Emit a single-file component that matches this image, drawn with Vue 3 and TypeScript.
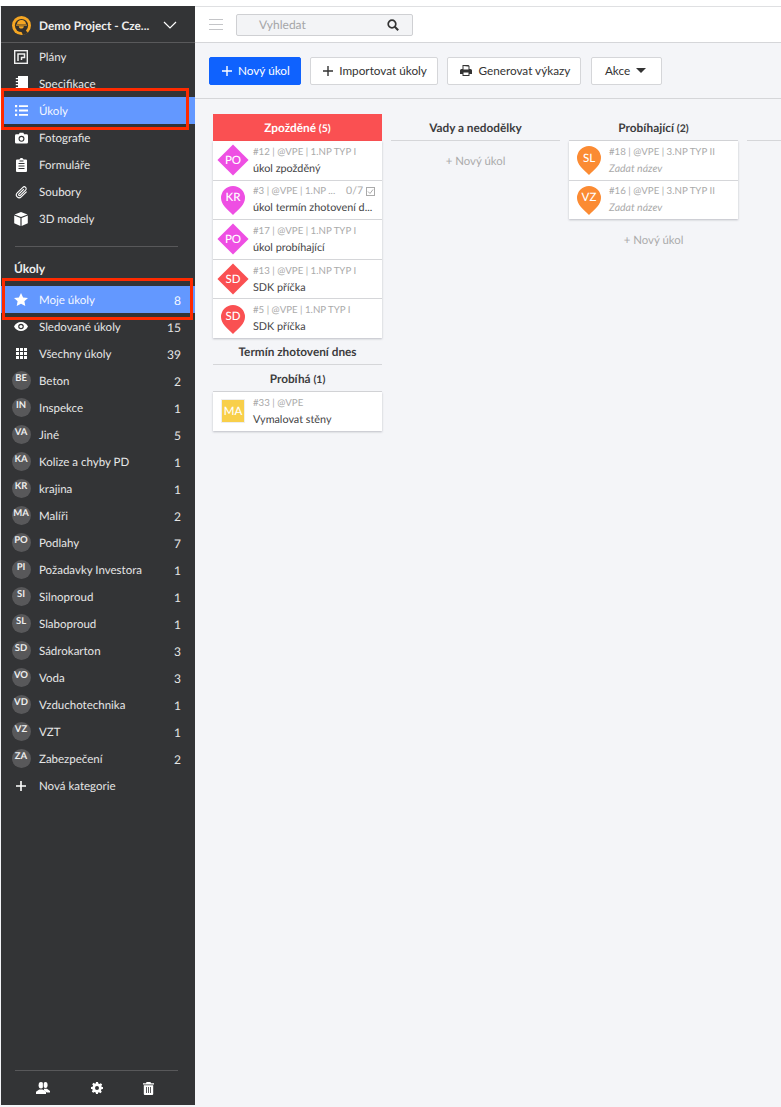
<script setup lang="ts">
interface NavItem { label: string; icon: string; active?: boolean }
interface Cat { code?: string; icon?: string; label: string; count?: number; active?: boolean }
interface Task { meta: string; title: string; code: string; color: string; shape: 'diamond' | 'pin' | 'square'; extra?: string; unnamed?: boolean }

const nav: NavItem[] = [
  { label: 'Plány', icon: 'plan' },
  { label: 'Specifikace', icon: 'book' },
  { label: 'Úkoly', icon: 'list', active: true },
  { label: 'Fotografie', icon: 'camera' },
  { label: 'Formuláře', icon: 'clip' },
  { label: 'Soubory', icon: 'paperclip' },
  { label: '3D modely', icon: 'cube' },
]
const cats: Cat[] = [
  { icon: 'star', label: 'Moje úkoly', count: 8, active: true },
  { icon: 'eye', label: 'Sledované úkoly', count: 15 },
  { icon: 'grid', label: 'Všechny úkoly', count: 39 },
  { code: 'BE', label: 'Beton', count: 2 },
  { code: 'IN', label: 'Inspekce', count: 1 },
  { code: 'VA', label: 'Jiné', count: 5 },
  { code: 'KA', label: 'Kolize a chyby PD', count: 1 },
  { code: 'KR', label: 'krajina', count: 1 },
  { code: 'MA', label: 'Malíři', count: 2 },
  { code: 'PO', label: 'Podlahy', count: 7 },
  { code: 'PI', label: 'Požadavky Investora', count: 1 },
  { code: 'SI', label: 'Silnoproud', count: 1 },
  { code: 'SL', label: 'Slaboproud', count: 1 },
  { code: 'SD', label: 'Sádrokarton', count: 3 },
  { code: 'VO', label: 'Voda', count: 3 },
  { code: 'VD', label: 'Vzduchotechnika', count: 1 },
  { code: 'VZ', label: 'VZT', count: 1 },
  { code: 'ZA', label: 'Zabezpečení', count: 2 },
  { icon: 'plus', label: 'Nová kategorie' },
]
const pink = '#ee4fe3'
const red = '#fa5052'
const orange = '#fb8b33'
const late: Task[] = [
  { meta: '#12 | @VPE | 1.NP TYP I', title: 'úkol zpožděný', code: 'PO', color: pink, shape: 'diamond' },
  { meta: '#3 | @VPE | 1.NP ...', title: 'úkol termín zhotovení d...', code: 'KR', color: pink, shape: 'pin', extra: '0/7' },
  { meta: '#17 | @VPE | 1.NP TYP I', title: 'úkol probíhající', code: 'PO', color: pink, shape: 'diamond' },
  { meta: '#13 | @VPE | 1.NP TYP I', title: 'SDK příčka', code: 'SD', color: red, shape: 'diamond' },
  { meta: '#5 | @VPE | 1.NP TYP I', title: 'SDK příčka', code: 'SD', color: red, shape: 'pin' },
]
const doing: Task[] = [
  { meta: '#33 | @VPE', title: 'Vymalovat stěny', code: 'MA', color: '#f8cf4a', shape: 'square' },
]
const running: Task[] = [
  { meta: '#18 | @VPE | 3.NP TYP II', title: 'Zadat název', code: 'SL', color: orange, shape: 'pin', unnamed: true },
  { meta: '#16 | @VPE | 3.NP TYP II', title: 'Zadat název', code: 'VZ', color: orange, shape: 'pin', unnamed: true },
]
const groups = [
  { tasks: late },
  { tasks: doing },
]
</script>

<template>
  <div class="app">
    <aside class="side">
      <div class="project">
        <svg class="logo" viewBox="0 0 19 19" width="19" height="19">
          <circle cx="9.500" cy="9.500" r="9.500" fill="#f5a623" />
          <circle cx="9.500" cy="9.500" r="6.600" fill="#33302c" />
          <path d="M5 8.200C5.200 5 7.400 4 9.500 4s4.300 1 4.500 4.200z" fill="#f5a623" />
          <rect x="4" y="8.600" width="11" height="1" fill="#f5a623" />
          <path d="M6.800 10.200h5c0 1.600-1 2.400-2.500 2.400s-2.500-.8-2.500-2.400z" fill="#f5a623" />
          <path d="M11 19l-2-4 3.500-2 3.500 4z" fill="#33302c" />
        </svg>
        <span class="pname">Demo Project - Cze...</span>
        <svg class="chev" viewBox="0 0 14 8" width="14" height="8"><path d="M1 1l6 6 6-6" fill="none" stroke="#fff" stroke-width="1.200" /></svg>
      </div>

      <nav class="nav">
        <a v-for="n in nav" :key="n.label" class="row" :class="{ on: n.active }">
          <span class="ic">
            <svg v-if="n.icon === 'plan'" viewBox="0 0 14 14" width="14" height="14"><rect x=".7" y=".7" width="12.600" height="12.600" fill="none" stroke="#f0f0f0" stroke-width="1.400" /><path d="M4 11V4h6.500v3.500H7.500V10" fill="none" stroke="#f0f0f0" stroke-width="1.500" /></svg>
            <svg v-else-if="n.icon === 'book'" viewBox="0 0 13 15" width="13" height="15"><path fill="#fff" d="M3 0h10v15H3zM.8 2h3v1.200H.8zM.8 5h3v1.200H.8zM.8 8h3v1.200H.8zM.8 11h3v1.200H.8z" /></svg>
            <svg v-else-if="n.icon === 'list'" viewBox="0 0 13 11" width="13" height="11"><path fill="#fff" d="M0 0h2.200v2.200H0zM0 4.400h2.200v2.200H0zM0 8.800h2.200V11H0zM4 .2h9v1.800H4zM4 4.600h9v1.800H4zM4 9h9v1.800H4z" /></svg>
            <svg v-else-if="n.icon === 'camera'" viewBox="0 0 14 12" width="13" height="12"><path fill="#fff" fill-rule="evenodd" d="M1.500 2h2.700L5 .3h4l.8 1.700h2.700A1.500 1.500 0 0 1 14 3.500v7a1.500 1.500 0 0 1-1.500 1.500h-11A1.500 1.500 0 0 1 0 10.500v-7A1.500 1.500 0 0 1 1.500 2zM7 3.700a3.200 3.200 0 1 0 0 6.400 3.200 3.200 0 0 0 0-6.400z" /><circle cx="7" cy="6.900" r="2" fill="#fff" /></svg>
            <svg v-else-if="n.icon === 'clip'" viewBox="0 0 11 14" width="11" height="14"><path fill="#fff" fill-rule="evenodd" d="M1 1.500h2.500C3.700.600 4.500 0 5.500 0s1.800.6 2 1.500H10a1 1 0 0 1 1 1V13a1 1 0 0 1-1 1H1a1 1 0 0 1-1-1V2.500a1 1 0 0 1 1-1zM2.500 5h6v1h-6zM2.500 7.500h6v1h-6zM2.500 10h6v1h-6zM3.500 2.500v1h4v-1z" /></svg>
            <svg v-else-if="n.icon === 'paperclip'" viewBox="0 0 14 14" width="13" height="14"><path fill="none" stroke="#fff" stroke-width="1.200" d="M12.500 6.500l-5.800 5.800a3 3 0 0 1-4.300-4.300L8.500 2a2 2 0 0 1 2.900 2.900L5.500 10.800a1 1 0 0 1-1.400-1.400L9.500 4" /></svg>
            <svg v-else viewBox="0 0 14 14" width="14" height="14"><path fill="#fff" d="M7 0l6.500 2.400L7 4.900.5 2.400zM.2 3.500l6.200 2.400V14L.2 11.300zM13.800 3.500L7.600 5.900V14l6.200-2.700z" /></svg>
          </span>
          <span class="lbl">{{ n.label }}</span>
        </a>
      </nav>

      <hr class="rule first" />
      <div class="head">Úkoly</div>

      <div class="cats">
        <a v-for="c in cats" :key="c.label" class="row" :class="{ on: c.active }">
          <span v-if="c.code" class="ic"><span class="badge">{{ c.code }}</span></span>
          <span v-else class="ic">
            <svg v-if="c.icon === 'star'" viewBox="0 0 14 13" width="14" height="13"><path fill="#fff" d="M7 0l2.100 4.400 4.900.6-3.600 3.300.9 4.700L7 10.700 2.700 13l.9-4.700L0 5l4.900-.6z" /></svg>
            <svg v-else-if="c.icon === 'eye'" viewBox="0 0 14 9" width="14" height="9"><path fill="#fff" fill-rule="evenodd" d="M0 4.500C1.500 1.700 4 0 7 0s5.500 1.700 7 4.500C12.500 7.300 10 9 7 9S1.500 7.300 0 4.500zM7 1.700a2.800 2.800 0 1 0 0 5.600 2.800 2.800 0 0 0 0-5.600z" /><circle cx="7" cy="4.500" r="1.600" fill="#fff" /></svg>
            <svg v-else-if="c.icon === 'grid'" viewBox="0 0 11 11" width="11" height="11"><path fill="#fff" d="M0 0h3v3H0zM4 0h3v3H4zM8 0h3v3H8zM0 4h3v3H0zM4 4h3v3H4zM8 4h3v3H8zM0 8h3v3H0zM4 8h3v3H4zM8 8h3v3H8z" /></svg>
            <svg v-else viewBox="0 0 10 10" width="10" height="10"><path fill="#fff" d="M4.200 0h1.600v4.200H10v1.600H5.800V10H4.200V5.800H0V4.200h4.200z" /></svg>
          </span>
          <span class="lbl">{{ c.label }}</span>
          <span v-if="c.count" class="count">{{ c.count }}</span>
        </a>
      </div>

      <div class="foot">
        <hr class="rule last" />
        <div class="tools">
          <svg viewBox="0 0 14 12" width="14" height="12"><ellipse cx="5" cy="3.200" rx="2.400" ry="3.200" fill="#fff" /><path fill="#fff" d="M0 12V9.800L3.200 7.500h3.600L10 9.800V12z" /><ellipse cx="9.500" cy="3" rx="2.100" ry="3" fill="#fff" /><path fill="#fff" d="M8 6.800h3l3 2.200v1.500h-3.200L7.800 8.300z" /><path d="M7.300 1v7" stroke="#333436" stroke-width=".7" /></svg>
          <svg viewBox="0 0 12 12" width="12" height="12"><path fill="#fff" fill-rule="evenodd" d="M5 0h2l.3 1.600 1.100.5L9.800 1.200l1.400 1.400-.9 1.400.5 1.100L12 5v2l-1.600.3-.5 1.100.9 1.400-1.400 1.400-1.400-.9-1.100.5L7 12H5l-.3-1.600-1.100-.5-1.400.9L.8 9.400l.9-1.400-.5-1.100L0 7V5l1.600-.3.500-1.100-.9-1.400L2.600.8 4 1.700l.7-.3zM6 4a2 2 0 1 0 0 4 2 2 0 0 0 0-4z" /></svg>
          <svg viewBox="0 0 11 13" width="11" height="13"><path fill="#fff" fill-rule="evenodd" d="M3.500 0h4l.5 1.200h3v1.300H0V1.200h3zM.8 3.300h9.400V12a1 1 0 0 1-1 1H1.800a1 1 0 0 1-1-1zM3 5v6h.8V5zM5.100 5v6h.8V5zM7.200 5v6H8V5z" /></svg>
        </div>
      </div>
    </aside>

    <main class="main">
      <header class="top">
        <span class="burger"><i></i><i></i><i></i></span>
        <div class="search">
          <span>Vyhledat</span>
          <svg viewBox="0 0 12 12" width="12" height="12"><circle cx="5" cy="5" r="3.800" fill="none" stroke="#333" stroke-width="1.700" /><path d="M7.800 7.800L11.200 11.200" stroke="#333" stroke-width="2" /></svg>
        </div>
      </header>

      <div class="toolbar">
        <button class="btn primary"><svg viewBox="0 0 10 10" width="10" height="10"><path fill="#fff" d="M4.300 0h1.400v4.300H10v1.400H5.700V10H4.300V5.700H0V4.300h4.300z" /></svg>Nový úkol</button>
        <button class="btn"><svg viewBox="0 0 10 10" width="10" height="10"><path fill="#333" d="M4.300 0h1.400v4.300H10v1.400H5.700V10H4.300V5.700H0V4.300h4.300z" /></svg>Importovat úkoly</button>
        <button class="btn"><svg viewBox="0 0 12 11" width="12" height="11"><path fill="#333" fill-rule="evenodd" d="M2.500 0h6l1 1v3h1A1.500 1.500 0 0 1 12 5.500V9H9.500v2h-7V9H0V5.500A1.500 1.500 0 0 1 1.500 4h1zM3.500 1v3.500h5V1.500H8zM3.500 7.500V10h5V7.500z" /></svg>Generovat výkazy</button>
        <button class="btn akce">Akce<i class="caret"></i></button>
      </div>

      <section class="board">
        <div class="col">
          <div class="ctitle late">Zpožděné <small>(5)</small></div>
          <div class="cards">
            <article v-for="t in groups[0].tasks" :key="t.meta" class="card">
              <span class="mark" :class="t.shape">
                <svg v-if="t.shape === 'pin'" viewBox="0 0 24 29" width="24" height="29"><path :fill="t.color" d="M12 0a12 12 0 0 1 12 12c0 6.500-6 11-12 17C6 23 0 18.500 0 12A12 12 0 0 1 12 0z" /></svg>
                <i v-else-if="t.shape === 'diamond'" :style="{ background: t.color }"></i>
                <b>{{ t.code }}</b>
              </span>
              <div class="ctext">
                <div class="meta"><span>{{ t.meta }}</span><span v-if="t.extra" class="extra">{{ t.extra }}
                  <svg viewBox="0 0 9 9" width="9" height="9"><rect x=".5" y=".5" width="8" height="8" fill="none" stroke="#aaa" /><path d="M2 4.500l2 2 3-4" fill="none" stroke="#aaa" /></svg></span></div>
                <div class="ttl">{{ t.title }}</div>
              </div>
            </article>
          </div>
          <div class="ctitle sub">Termín zhotovení dnes</div>
          <div class="ctitle sub">Probíhá <small>(1)</small></div>
          <div class="cards">
            <article v-for="t in groups[1].tasks" :key="t.meta" class="card">
              <span class="mark square" :style="{ background: t.color }"><b>{{ t.code }}</b></span>
              <div class="ctext">
                <div class="meta"><span>{{ t.meta }}</span></div>
                <div class="ttl">{{ t.title }}</div>
              </div>
            </article>
          </div>
        </div>

        <div class="col">
          <div class="ctitle">Vady a nedodělky</div>
          <div class="add first-add">+ Nový úkol</div>
        </div>

        <div class="col">
          <div class="ctitle">Probíhající <small>(2)</small></div>
          <div class="cards">
            <article v-for="t in running" :key="t.meta" class="card">
              <span class="mark pin">
                <svg viewBox="0 0 24 29" width="24" height="29"><path :fill="t.color" d="M12 0a12 12 0 0 1 12 12c0 6.500-6 11-12 17C6 23 0 18.500 0 12A12 12 0 0 1 12 0z" /></svg>
                <b>{{ t.code }}</b>
              </span>
              <div class="ctext">
                <div class="meta"><span>{{ t.meta }}</span></div>
                <div class="ttl unnamed">{{ t.title }}</div>
              </div>
            </article>
          </div>
          <div class="add">+ Nový úkol</div>
        </div>

        <div class="col stub"><div class="ctitle">&nbsp;</div></div>
      </section>
    </main>

    <div class="mark-box box-a"></div>
    <div class="mark-box box-b"></div>
  </div>
</template>

<style>
html, body { margin: 0; background: #fff; }
</style>

<style scoped>
.app {
  position: relative;
  display: flex;
  width: 781px;
  height: 1107px;
  box-sizing: border-box;
  padding: 6px 0 2px 1px;
  overflow: hidden;
  font-family: Lato, "Noto Sans", sans-serif;
  font-size: 12px;
  text-rendering: geometricPrecision;
  color: #333;
  background: #f4f5f8;
}
.app::before { content: ""; position: absolute; left: 0; right: 0; top: 0; height: 6px; background: #fff; }
.app::after { content: ""; position: absolute; left: 0; right: 0; top: 6px; height: 1px; background: #dfe0e2; }
.side {
  width: 194px;
  flex: none;
  display: flex;
  flex-direction: column;
  background: #333436;
  color: #e8e8e8;
  position: relative;
  z-index: 1;
}
.project {
  height: 37px;
  display: flex;
  align-items: center;
  box-sizing: border-box;
  padding: 2px 10px 0 11px;
  border-bottom: 1px solid #59595b;
  flex: none;
}
.logo { flex: none; }
.pname { margin-left: 8px; font-weight: 700; color: #eee; font-size: 11.800px; width: 113px; white-space: nowrap; flex: none; }
.chev { margin-left: 11px; flex: none; }
.row {
  height: 27px;
  display: flex;
  align-items: center;
  padding-right: 14px;
  color: #e6e6e6;
  font-size: 11.500px;
}
.row.on { background: #6398ff; color: #f4f7ff; }
.ic { width: 38px; flex: none; display: flex; justify-content: center; box-sizing: border-box; padding: 0 3px 0 5px; }
.lbl { flex: 1; white-space: nowrap; padding-top: 2px; }
.count { text-align: right; font-size: 12px; padding-top: 2px; }
.badge {
  width: 19px;
  height: 19px;
  border-radius: 50%;
  background: #58585a;
  color: #eee;
  font-size: 9.500px;
  font-weight: 700;
  display: flex;
  align-items: center;
  justify-content: center;
  padding-bottom: 4px;
  box-sizing: border-box;
  flex: none;
}
.rule { margin: 0 17px 0 14px; border: 0; border-top: 1px solid #58585a; }
.rule.first { margin-top: 14px; }
.head { font-weight: 700; color: #eee; padding: 14px 0 10px 14px; line-height: 15px; margin-left: -1px; }
.foot { margin-top: auto; }
.tools { height: 34px; display: flex; align-items: center; justify-content: space-between; padding: 0 41px 0 35px; }
.main { flex: 1; min-width: 0; display: flex; flex-direction: column; position: relative; z-index: 1; }
.top {
  flex: none;
  box-sizing: border-box;
  background: #fff;
  border-bottom: 1px solid #d5d6d9;
  display: flex;
  align-items: center;
  padding-left: 14px;
  margin-top: 1px;
  height: 36px;
}
.burger { width: 14px; display: flex; flex-direction: column; gap: 4px; }
.burger i { height: 1px; background: #c4c5c8; display: block; }
.search {
  margin-left: 13px;
  width: 177px;
  height: 22px;
  box-sizing: border-box;
  background: #f3f4f6;
  border: 1px solid #cfd0d3;
  border-radius: 2px;
  display: flex;
  align-items: center;
  justify-content: space-between;
  padding: 0 13px 0 22px;
  color: #a5a6a8;
}
.toolbar {
  height: 56px;
  box-sizing: border-box;
  flex: none;
  border-bottom: 1px solid #d5d6d9;
  display: flex;
  align-items: center;
  padding: 0 0 0 14px;
  gap: 9.500px;
}
.btn {
  height: 28px;
  box-sizing: border-box;
  border: 1px solid #d5d6d9;
  border-radius: 2px;
  background: #fff;
  color: #333;
  font: inherit;
  font-size: 11.750px;
  display: flex;
  align-items: center;
  gap: 6px;
  padding: 0 10px 0 12px;
}
.btn.primary { background: #0f62fe; border-color: #0f62fe; color: #fff; }
.btn.akce { padding: 0 15px 0 13px; gap: 6px; }
.caret { width: 0; height: 0; border: 5px solid transparent; border-top: 5px solid #333; border-bottom: 0; }
.board { flex: 1; display: flex; gap: 9px; padding: 15px 0 0 18px; overflow: hidden; }
.col { width: 169px; flex: none; }
.ctitle {
  height: 26px;
  line-height: 28px;
  text-align: center;
  font-weight: 700;
  font-size: 11.800px;
  color: #3d3d3f;
  border-bottom: 1px solid #d5d6d9;
}
.ctitle small { font-size: 10.500px; font-weight: 700; }
.ctitle.late { background: #fa5052; color: #fff; border-bottom-color: #fa5052; }
.cards { background: #fff; box-shadow: 0 1px 2px rgba(60, 64, 80, .3); }
.card {
  height: 38.600px;
  display: flex;
  align-items: center;
  border-bottom: 1px solid #d5d6d9;
  padding-left: 5px;
}
.card:last-child { border-bottom: 0; }
.mark { width: 30px; height: 30px; flex: none; position: relative; display: flex; align-items: center; justify-content: center; }
.mark b { position: relative; color: #fff; font-weight: 500; font-size: 11.500px; }
.mark.pin svg { position: absolute; left: 3px; top: 1px; }
.mark.pin b { margin-top: -4px; }
.mark.diamond i { position: absolute; left: 4px; top: 4px; width: 22px; height: 22px; transform: rotate(45deg); }
.mark.square {
  width: 22px;
  height: 22px;
  margin: 0 4px;
  box-shadow: 0 0 0 1px #eee;
}
.ctext { margin-left: 5px; flex: 1; min-width: 0; padding-right: 7px; }
.meta { display: flex; justify-content: space-between; align-items: center; font-size: 9.700px; color: #aaa; line-height: 15px; padding-top: 1px; }
.extra { display: flex; align-items: center; gap: 3px; font-size: 10.500px; }
.ttl { line-height: 17px; color: #444446; font-size: 10.800px; white-space: nowrap; }
.unnamed { font-style: italic; color: #aaa; font-size: 10.500px; margin: 1px 0 -1px; }
.add { text-align: center; color: #aaa; line-height: 16px; font-size: 11.400px; }
.first-add { margin-top: 13px; }
.col > .cards + .add { margin-top: 14px; }
.stub { width: 60px; }
.mark-box {
  position: absolute;
  box-sizing: border-box;
  border: 3px solid #ff2a00;
  z-index: 5;
}
.box-a { left: 1px; top: 88px; width: 188px; height: 42px; }
.box-b { left: 2px; top: 278px; width: 191px; height: 42px; }
</style>
